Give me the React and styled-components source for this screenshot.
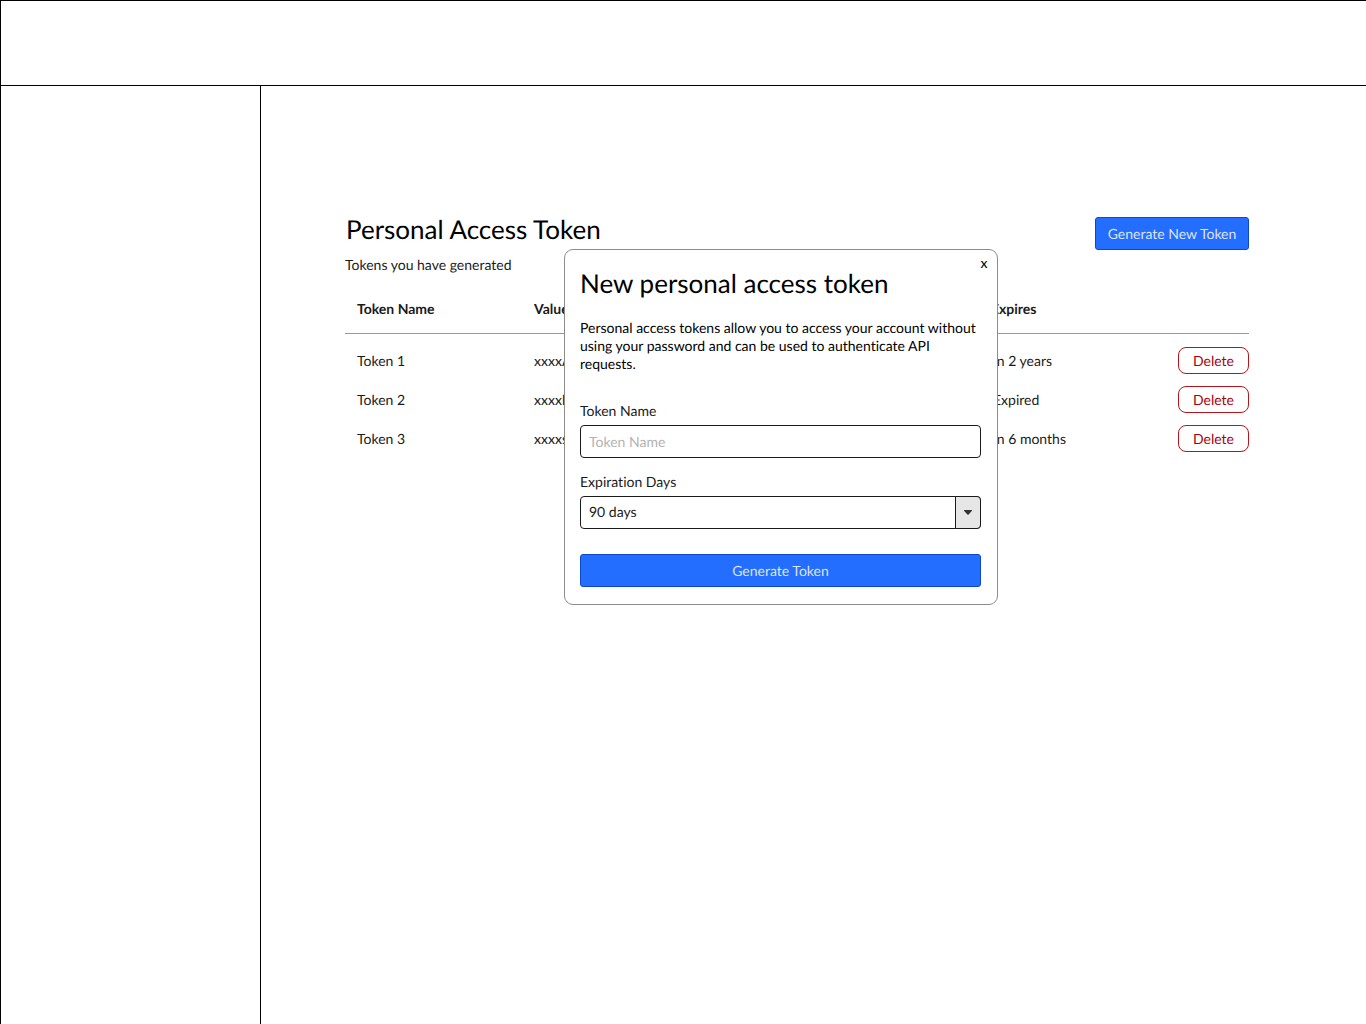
import React from "react";
import styled, { createGlobalStyle, css } from "styled-components";

const GlobalStyle = createGlobalStyle`
  *, *::before, *::after { box-sizing: border-box; }
  body {
    margin: 0;
    background: #fff;
    color: #1a1a1a;
    font: 400 14px/18px Lato, "Liberation Sans", sans-serif;
    font-variant-ligatures: none;
    text-rendering: geometricPrecision;
  }
  button, input, select {
    font: inherit;
    color: inherit;
    text-rendering: inherit;
  }
`;

const Shell = styled.div`
  display: grid;
  grid-template: 85px 1fr / 260px 1fr;
  min-height: 100vh;
  border-top: 1px solid #000;
  border-left: 1px solid #000;
`;

const TopBar = styled.header`
  grid-column: 1 / -1;
  border-bottom: 1px solid #000;
`;

const Sidebar = styled.aside`
  border-right: 1px solid #000;
`;

const Main = styled.main`
  padding: 131px 117px 64px 84px;
`;

const Section = styled.section`
  position: relative;
`;

const SectionHead = styled.div`
  display: flex;
  justify-content: space-between;
  align-items: flex-start;
`;

const titleText = css`
  margin: 0;
  color: #000;
  font-size: 26px;
  font-weight: 400;
  line-height: 32px;
`;

const PageTitle = styled.h1`
  ${titleText}
  margin-top: -4px;
  padding-left: 1px;
`;

const Subtitle = styled.p`
  margin: 11px 0 0;
`;

const PrimaryButton = styled.button`
  width: ${(p) => (p.$block ? "100%" : "154px")};
  height: 33px;
  padding: 0;
  border: 1px solid #0b48cf;
  border-radius: 3px;
  background: #236eff;
  color: #dfe3ea;
  cursor: pointer;
`;

const DeleteButton = styled.button`
  display: block;
  width: 71px;
  height: 27px;
  margin-left: auto;
  padding: 1px 0 0;
  border: 1px solid #b8141c;
  border-radius: 8px;
  background: #fff;
  color: #a9000b;
  cursor: pointer;
`;

const Table = styled.table`
  width: 100%;
  margin-top: 11px;
  border-collapse: collapse;
  table-layout: fixed;
  text-align: left;

  th {
    height: 48px;
    padding: 0 12px;
    border-bottom: 1px solid #999;
    font-weight: 700;
  }
  th:last-child { padding-left: 10px; }
  td {
    height: 39px;
    padding: 2px 12px 0;
  }
  td:last-child { padding: 0; }
  tbody::before {
    content: "";
    display: block;
    height: 7px;
  }
`;

const Col = styled.col`
  width: ${(p) => p.$width};
`;

const Dialog = styled.div`
  position: absolute;
  top: 32px;
  left: 219px;
  width: 434px;
  padding: 17px 16px 17px 15px;
  border: 1px solid #8c8c8c;
  border-radius: 9px;
  background: #fff;
`;

const DialogTitle = styled.h2`
  ${titleText}
`;

const CloseButton = styled.button`
  position: absolute;
  top: 3px;
  right: 4px;
  width: 18px;
  height: 20px;
  padding: 0;
  border: 0;
  background: none;
  color: #000;
  cursor: pointer;
`;

const Description = styled.p`
  margin: 20px 0 29px;
  color: #000;
`;

const Field = styled.div`
  margin-bottom: ${(p) => (p.$last ? "25px" : "15px")};
`;

const Label = styled.label`
  display: block;
  margin-bottom: 5px;
`;

const control = css`
  display: block;
  width: 100%;
  height: 33px;
  padding: 0 8px;
  border: 1px solid #1a1a1a;
  border-radius: 4px;
  background: #fff;
`;

const TextInput = styled.input`
  ${control}
  &::placeholder { color: #b3b3b3; opacity: 1; }
`;

const SelectBox = styled.div`
  position: relative;
`;

const Select = styled.select`
  ${control}
  padding-bottom: 2px;
  appearance: none;
`;

const SelectArrow = styled.span`
  position: absolute;
  top: 0;
  right: 0;
  bottom: 0;
  display: grid;
  place-items: center;
  width: 26px;
  border: 1px solid #1a1a1a;
  border-radius: 0 4px 4px 0;
  background: #e6e6e6;
  pointer-events: none;
`;

const tokens = [
  { name: "Token 1", value: "xxxxA", expires: "In 2 years" },
  { name: "Token 2", value: "xxxxl", expires: "Expired" },
  { name: "Token 3", value: "xxxxs", expires: "In 6 months" },
];

function TokenTable() {
  return (
    <Table>
      <colgroup>
        <Col $width="177px" />
        <Col />
        <Col $width="186px" />
        <Col $width="82px" />
      </colgroup>
      <thead>
        <tr>
          <th scope="col">Token Name</th>
          <th scope="col">Value</th>
          <th scope="col" colSpan={2}>Expires</th>
        </tr>
      </thead>
      <tbody>
        {tokens.map((token) => (
          <tr key={token.name}>
            <td>{token.name}</td>
            <td>{token.value}</td>
            <td>{token.expires}</td>
            <td>
              <DeleteButton type="button">Delete</DeleteButton>
            </td>
          </tr>
        ))}
      </tbody>
    </Table>
  );
}

function NewTokenDialog() {
  return (
    <Dialog role="dialog" aria-labelledby="dialog-title">
      <CloseButton type="button">x</CloseButton>
      <DialogTitle id="dialog-title">New personal access token</DialogTitle>
      <Description>
        Personal access tokens allow you to access your account without using
        your password and can be used to authenticate API requests.
      </Description>
      <Field>
        <Label htmlFor="token-name">Token Name</Label>
        <TextInput id="token-name" type="text" placeholder="Token Name" />
      </Field>
      <Field $last>
        <Label htmlFor="expiration">Expiration Days</Label>
        <SelectBox>
          <Select id="expiration" defaultValue="90">
            <option value="90">90 days</option>
          </Select>
          <SelectArrow>
            <svg width="8" height="5" viewBox="0 0 8 5" aria-hidden="true">
              <path d="M0.5 0H7.5Q8.3 0.6 7.6 1.3L4.6 4.6Q4 5.1 3.4 4.6L0.4 1.3Q-0.3 0.6 0.5 0Z" fill="#333" />
            </svg>
          </SelectArrow>
        </SelectBox>
      </Field>
      <PrimaryButton type="button" $block>Generate Token</PrimaryButton>
    </Dialog>
  );
}

export default function App() {
  return (
    <>
      <GlobalStyle />
      <Shell>
        <TopBar />
        <Sidebar />
        <Main>
          <Section>
            <SectionHead>
              <div>
                <PageTitle>Personal Access Token</PageTitle>
                <Subtitle>Tokens you have generated</Subtitle>
              </div>
              <PrimaryButton type="button">Generate New Token</PrimaryButton>
            </SectionHead>
            <TokenTable />
            <NewTokenDialog />
          </Section>
        </Main>
      </Shell>
    </>
  );
}
